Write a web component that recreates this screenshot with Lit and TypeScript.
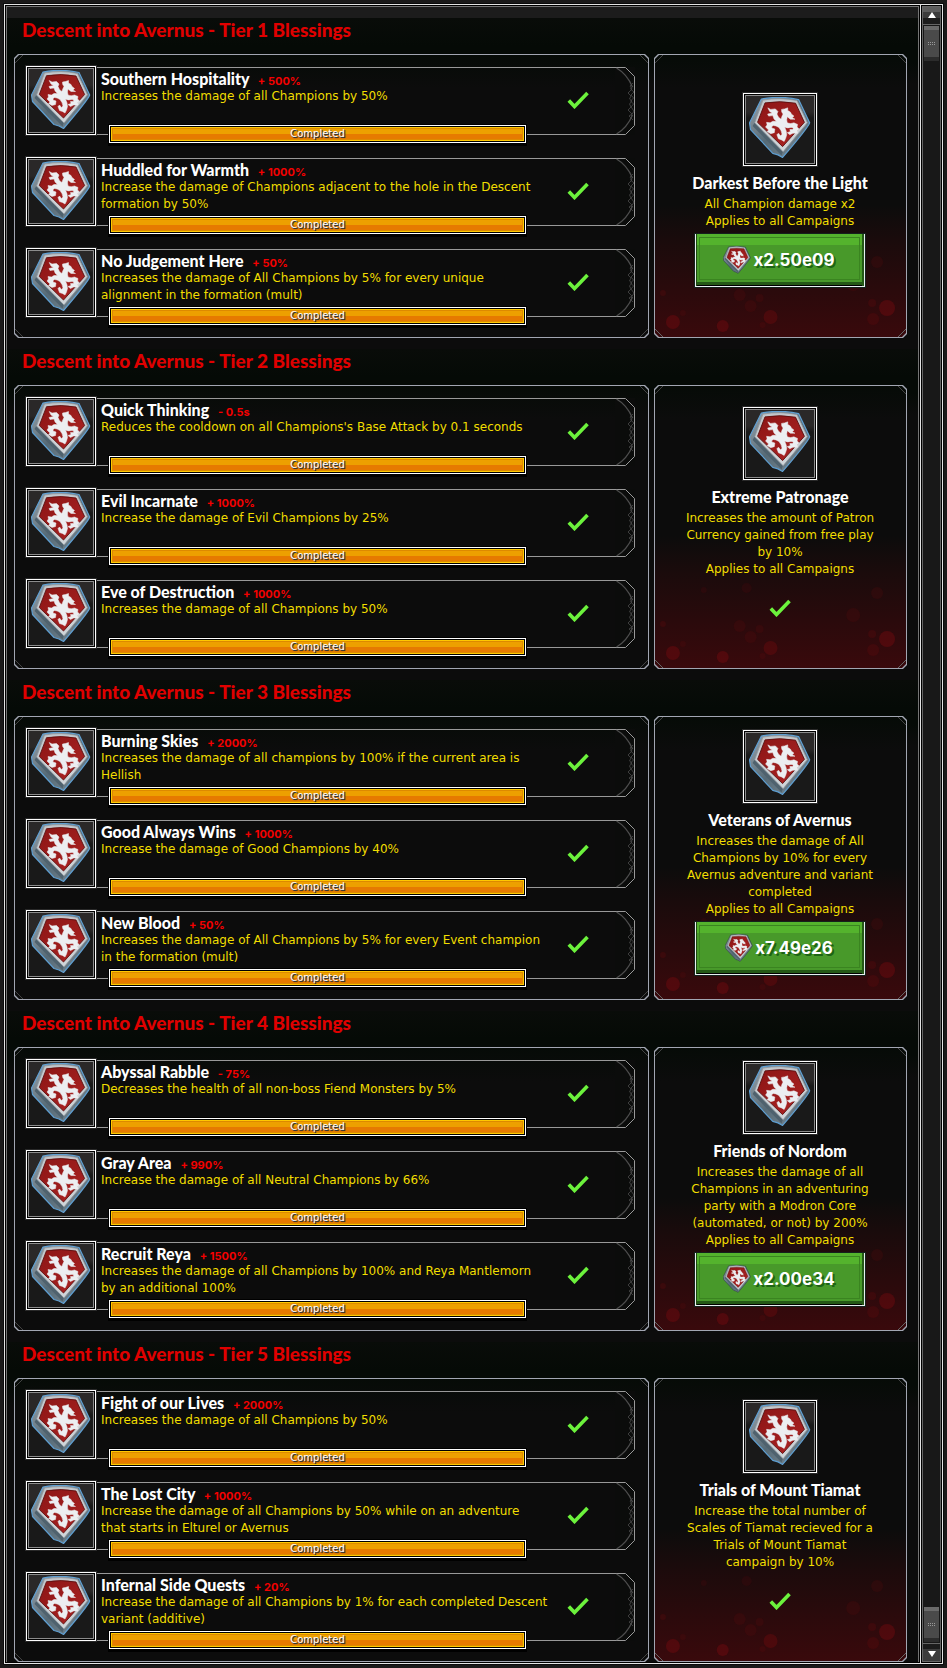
import { LitElement, html, css, svg } from "lit";
import { customElement, property } from "lit/decorators.js";

interface Blessing {
  name: string;
  bonus: string;
  text: string;
}

interface Reward {
  name: string;
  text: string;
  cost?: string;
}

interface Tier {
  level: number;
  blessings: Blessing[];
  reward: Reward;
}

const TIERS: Tier[] = [
  {
    level: 1,
    blessings: [
      { name: "Southern Hospitality", bonus: "+ 500%", text: "Increases the damage of all Champions by 50%" },
      { name: "Huddled for Warmth", bonus: "+ 1000%", text: "Increase the damage of Champions adjacent to the hole in the Descent\nformation by 50%" },
      { name: "No Judgement Here", bonus: "+ 50%", text: "Increases the damage of All Champions by 5% for every unique\nalignment in the formation (mult)" },
    ],
    reward: { name: "Darkest Before the Light", text: "All Champion damage x2\nApplies to all Campaigns", cost: "x2.50e09" },
  },
  {
    level: 2,
    blessings: [
      { name: "Quick Thinking", bonus: "- 0.5s", text: "Reduces the cooldown on all Champions's Base Attack by 0.1 seconds" },
      { name: "Evil Incarnate", bonus: "+ 1000%", text: "Increase the damage of Evil Champions by 25%" },
      { name: "Eve of Destruction", bonus: "+ 1000%", text: "Increases the damage of all Champions by 50%" },
    ],
    reward: { name: "Extreme Patronage", text: "Increases the amount of Patron\nCurrency gained from free play\nby 10%\nApplies to all Campaigns" },
  },
  {
    level: 3,
    blessings: [
      { name: "Burning Skies", bonus: "+ 2000%", text: "Increases the damage of all champions by 100% if the current area is\nHellish" },
      { name: "Good Always Wins", bonus: "+ 1000%", text: "Increase the damage of Good Champions by 40%" },
      { name: "New Blood", bonus: "+ 50%", text: "Increases the damage of All Champions by 5% for every Event champion\nin the formation (mult)" },
    ],
    reward: { name: "Veterans of Avernus", text: "Increases the damage of All\nChampions by 10% for every\nAvernus adventure and variant\ncompleted\nApplies to all Campaigns", cost: "x7.49e26" },
  },
  {
    level: 4,
    blessings: [
      { name: "Abyssal Rabble", bonus: "- 75%", text: "Decreases the health of all non-boss Fiend Monsters by 5%" },
      { name: "Gray Area", bonus: "+ 990%", text: "Increase the damage of all Neutral Champions by 66%" },
      { name: "Recruit Reya", bonus: "+ 1500%", text: "Increases the damage of all Champions by 100% and Reya Mantlemorn\nby an additional 100%" },
    ],
    reward: { name: "Friends of Nordom", text: "Increases the damage of all\nChampions in an adventuring\nparty with a Modron Core\n(automated, or not) by 200%\nApplies to all Campaigns", cost: "x2.00e34" },
  },
  {
    level: 5,
    blessings: [
      { name: "Fight of our Lives", bonus: "+ 2000%", text: "Increases the damage of all Champions by 50%" },
      { name: "The Lost City", bonus: "+ 1000%", text: "Increase the damage of all Champions by 50% while on an adventure\nthat starts in Elturel or Avernus" },
      { name: "Infernal Side Quests", bonus: "+ 20%", text: "Increase the damage of all Champions by 1% for each completed Descent\nvariant (additive)" },
    ],
    reward: { name: "Trials of Mount Tiamat", text: "Increase the total number of\nScales of Tiamat recieved for a\nTrials of Mount Tiamat\ncampaign by 10%" },
  },
];

@customElement("favor-shield")
export class FavorShield extends LitElement {
  @property({ type: Boolean }) glow = false;

  static styles = css`
    :host { display: block; }
    svg { display: block; width: 100%; height: 100%; }
  `;

  render() {
    return html`<svg viewBox="5 4 60 60" aria-hidden="true">
      <defs>
        <linearGradient id="edge" x1="0" y1="0" x2="1" y2="1">
          <stop offset="0" stop-color="#9aa4ac"></stop>
          <stop offset=".5" stop-color="#566a76"></stop>
          <stop offset="1" stop-color="#7d8c96"></stop>
        </linearGradient>
        <linearGradient id="face" x1="0" y1="0" x2="0" y2="1">
          <stop offset="0" stop-color="#c2c6ca"></stop>
          <stop offset="1" stop-color="#d0d6da"></stop>
        </linearGradient>
        <linearGradient id="red" x1="0" y1="0" x2="1" y2="1">
          <stop offset="0" stop-color="#8c1515"></stop>
          <stop offset="1" stop-color="#ad2424"></stop>
        </linearGradient>
      </defs>
      <path d="M17 6Q35 2.500 53 6.500L63.700 29Q62 34 37.500 62.500L33 60L28 58.500L6.500 35.500L5.500 29Z"
        fill="url(#edge)" stroke=${this.glow ? "#5f9fd2" : "#2e3d47"} stroke-width="1.200" stroke-linejoin="round"></path>
      <path d="M8.500 32L36.500 60.500L38 56L11 28Z" fill="#4f626e"></path>
      <path d="M18.500 7Q35 4 51.500 7.500L61.500 28.800L38 57L10.500 29Z" fill="url(#face)" stroke="#8e979e" stroke-width=".8"></path>
      <path d="M20.500 9.700Q35 7.300 50 10L58.600 28.500L37.500 52L13.300 28.500Z" fill="url(#red)" stroke="#5e1010" stroke-width=".9"></path>
      <g fill="#eceef1" stroke="#eceef1" stroke-linejoin="round" stroke-width=".5">
        <path d="M23.200 14.500L26 16L30.500 15.500L33 18L32 20.500Q33 24 36 25.500Q37 22 38 20.500Q36 18.500 36.500 16L39.500 15.500L42.500 14.500L42.500 17L45 18.500L46 20.500L48.500 22.500L47 24L49.500 25.500L45 25.500L42 23Q41 26 42 29Q45 30.500 48.500 29L52 30.500L51.500 33L53.500 35L51.500 37L52 39L47.500 39L44.500 40.500L42 38.500L45 37.500L44.500 35.500L47.500 35.500Q48.500 33 45.500 33.500Q42 34.500 39.500 33Q41.500 37 41.500 40.500L40.500 44L39 47L36.500 45.500L33.500 44.500L32 40.500L33.500 39L35.500 41.500L37 40Q36.500 36.500 34 33.500Q31 31.500 28.500 31.500Q26.500 32 27 34L30 35L29.500 38.500L26 39.500L22.500 37.500L24 36L21 33L22.500 31L22 28.500L25.500 29L28 27.500L31.500 27.500Q28.500 25.500 28 22L24 22.500L23 20.500L27.500 19.500L25 18Z"></path>
      </g>
    </svg>`;
  }
}

const check = html`<svg class="check" viewBox="0 0 22 18" role="img" aria-label="Completed">
  <path d="M1.800 9.500L7.500 15.500L20.500 2" fill="none" stroke="#6cf23c" stroke-width="3.600"></path>
</svg>`;

@customElement("blessing-row")
export class BlessingRow extends LitElement {
  @property({ attribute: false }) blessing!: Blessing;

  static styles = css`
    :host { display: grid; grid-template-columns: 71px 1fr; height: 69px; }
    .icon {
      box-sizing: border-box;
      width: 70px;
      height: 69px;
      border: 1px solid #fff;
      outline: 1px solid #292929;
      padding: 3px 4px;
      background: linear-gradient(#2a2828 0 18px, #191919 24px);
      box-shadow: inset 0 0 0 1px #000, inset 0 0 0 2px #8c8c8c;
    }
    favor-shield { width: 60px; height: 60px; }
    .body {
      display: grid;
      grid-template-columns: 442px 1fr;
      grid-template-rows: 55px 20px;
      margin: 1px 10px 1px 0;
      height: 66px;
      border-top: 1px solid #999;
      border-bottom: 1px solid #999;
      position: relative;
    }
    .text { padding: 2px 0 0 4px; }
    h3 {
      margin: 0 0 1px;
      font: 900 16px/17px Lato, sans-serif;
      color: #fff;
      white-space: nowrap;
    }
    .bonus { margin-left: 5px; font: 700 11px/12px Inter, sans-serif; color: #f40000; }
    p {
      margin: 0;
      font: 12px/17px "DejaVu Sans", sans-serif;
      color: #f2de00;
      white-space: pre;
    }
    .check { width: 22px; height: 18px; margin: 23px 0 0 28px; }
    .bar {
      box-sizing: border-box;
      width: 417px;
      height: 18px;
      margin: 2px 0 0 12px;
      border: 1px solid #fff;
      outline: 1px solid #000;
      padding: 1px;
      background: #000;
      box-shadow: 0 2px 0 1px #000;
    }
    .fill {
      box-sizing: border-box;
      height: 14px;
      border: 1px solid #ffc800;
      background: linear-gradient(#eda000 0 6px, #e67a00 6px);
      box-shadow: inset 0 0 0 1px #dd8a00;
      font: 10px/12px "DejaVu Sans", sans-serif;
      color: #fff;
      text-align: center;
      text-shadow: 1px 1px 0 #333, 1px 1px 1px #333;
    }
    .tip { position: absolute; right: -10px; top: -1px; width: 20px; height: 68px; }
  `;

  render() {
    const b = this.blessing;
    return html`
      <div class="icon"><favor-shield glow></favor-shield></div>
      <div class="body">
        <div class="text">
          <h3>${b.name} <span class="bonus">${b.bonus}</span></h3>
          <p>${b.text}</p>
        </div>
        ${check}
        <div class="bar"><div class="fill" role="progressbar" aria-label=${b.name} aria-valuenow="100">Completed</div></div>
        <svg class="tip" viewBox="0 0 20 68" aria-hidden="true">
          <rect width="20" height="68" fill="#0b0c0b"></rect>
          <path d="M0 .5H10.500L19.500 9.500V58.500L10.500 67.500H0" fill="none" stroke="#999"></path>
          <path d="M1.500 1Q12 7 17.500 20M1.500 67Q12 61 17.500 48" fill="none" stroke="#4d4d4d" stroke-width="1.300"></path>
          <path d="M18 16L15 19L17 22L13 26L16 29L14.500 32L17 34L14.500 37L16 40L13 43L17 47L14 49L18 53M18 19L15.500 22L19 25L16 28L18.500 31L15.500 34L18.500 37L16 40L19 44L16 49" fill="none" stroke="#4a4a4a" stroke-width=".8"></path>
        </svg>
      </div>`;
  }
}

@customElement("reward-card")
export class RewardCard extends LitElement {
  @property({ attribute: false }) reward!: Reward;

  static styles = css`
    :host {
      position: relative;
      box-sizing: border-box;
      display: flex;
      flex-direction: column;
      justify-content: center;
      align-items: center;
      padding: 0 1px 12px 0;
      height: 100%;
      text-align: center;
    }
    .spots { position: absolute; left: 0; bottom: 0; width: 100%; height: 100px; }
    .icon {
      box-sizing: border-box;
      width: 74px;
      height: 73px;
      border: 1px solid #fff;
      outline: 1px solid #292929;
      padding: 3px 5px;
      background: linear-gradient(#2a2828 0 18px, #191919 24px);
      box-shadow: inset 0 0 0 1px #000, inset 0 0 0 2px #8c8c8c;
    }
    favor-shield { width: 62px; height: 62px; }
    h3 {
      margin: 8px 0 5px;
      font: 900 16px/17px Lato, sans-serif;
      color: #fff;
    }
    p {
      margin: 0;
      font: 12px/17px "DejaVu Sans", sans-serif;
      color: #f2de00;
      white-space: pre;
    }
    .action {
      position: relative;
      display: grid;
      place-items: center;
      width: 170px;
      height: 53px;
      margin-top: 4px;
    }
    .check { width: 22px; height: 18px; margin-bottom: 2px; }
    button {
      box-sizing: border-box;
      display: flex;
      justify-content: center;
      align-items: center;
      gap: 2px;
      width: 170px;
      height: 53px;
      border: 1px solid #e8f0f0;
      border-top: 0;
      padding: 0 2px 0 0;
      background: linear-gradient(#54b32d 0 11px, #48992a 11px 48px, #245816 48px 51px, #12300c 51px);
      box-shadow: inset 1px 0 #1f4a12, inset -2px 0 #245816, inset 0 -1px #000;
      outline: 1px solid #14201c;
      font: 700 17px/24px Inter, sans-serif;
      color: #fff;
      text-shadow: 2px 2px 0 #1d6415;
    }
    button::before {
      content: "";
      position: absolute;
      inset: 3px 5px 7px 4px;
      border: 1px solid #3a8420;
    }
    button favor-shield { width: 28px; height: 28px; }
  `;

  render() {
    const r = this.reward;
    return html`
      <svg class="spots" viewBox="0 0 252 100" preserveAspectRatio="none" aria-hidden="true">
        ${[
          [18, 85, 7, 0.4], [68, 89, 6, 0.4], [116, 80, 7, 0.35], [233, 71, 8, 0.4], [219, 82, 6, 0.2],
          [85, 58, 6, 0.15], [96, 69, 6, 0.15], [105, 61, 4, 0.15], [28, 76, 3, 0.15], [8, 56, 3, 0.2],
          [218, 66, 4, 0.2], [199, 47, 7, 0.15], [223, 25, 6, 0.15], [92, 20, 5, 0.12], [49, 22, 3, 0.12], [108, 88, 3, 0.15],
        ].map(([x, y, r, o]) => svg`<circle cx=${x} cy=${y} r=${r} fill="#7c0b0e" fill-opacity=${o}></circle>`)}
      </svg>
      <div class="icon"><favor-shield glow></favor-shield></div>
      <h3>${r.name}</h3>
      <p>${r.text}</p>
      <div class="action">
        ${r.cost ? html`<button type="button"><favor-shield></favor-shield><span>${r.cost}</span></button>` : check}
      </div>`;
  }
}

@customElement("app-root")
export class AppRoot extends LitElement {
  static styles = css`
    :host {
      display: block;
      box-sizing: border-box;
      min-height: 100vh;
      padding: 4px;
      background: #1b1a1a;
    }
    .frame {
      display: grid;
      grid-template-columns: 1fr 22px;
      border: 1px solid #e4e4e4;
      outline: 1px solid #0c0c0c;
    }
    main {
      border: 1px solid #000;
      box-shadow: inset 0 0 0 1px #747474;
      padding: 12px 12px 0 8px;
      background: linear-gradient(#1c1c1c 0 12px, #0c0c0c 12px);
    }
    .tier {
      margin: 0 -11px 0 -7px;
      padding: 0 11px 11px 7px;
      background: linear-gradient(#090c09, #050a06 28px 44px, #0c0c0c 66px);
    }
    .tier:last-child { padding-bottom: 0; }
    h2 {
      margin: 0;
      height: 36px;
      padding-left: 8px;
      font: 900 19px/24px Lato, sans-serif;
      color: #e00000;
    }
    .panels {
      display: grid;
      grid-template-columns: 1fr 253px;
      gap: 5px;
    }
    .panel {
      position: relative;
      box-sizing: border-box;
      height: 284px;
      padding: 1px;
      background: #a2a6b2;
      clip-path: polygon(4px 0, calc(100% - 4px) 0, 100% 4px, 100% calc(100% - 4px), calc(100% - 4px) 100%, 4px 100%, 0 calc(100% - 4px), 0 4px);
    }
    .inner {
      box-sizing: border-box;
      height: 100%;
      clip-path: polygon(4px 0, calc(100% - 4px) 0, 100% 4px, 100% calc(100% - 4px), calc(100% - 4px) 100%, 4px 100%, 0 calc(100% - 4px), 0 4px);
      background:
        linear-gradient(135deg, transparent 5px, #444 5px 6px, transparent 6px) 0 0 / 12px 12px no-repeat,
        linear-gradient(225deg, transparent 5px, #444 5px 6px, transparent 6px) 100% 0 / 12px 12px no-repeat,
        linear-gradient(45deg, transparent 5px, #444 5px 6px, transparent 6px) 0 100% / 12px 12px no-repeat,
        linear-gradient(315deg, transparent 5px, #444 5px 6px, transparent 6px) 100% 100% / 12px 12px no-repeat,
        linear-gradient(#060b07, #0c0c0c 33px);
    }
    .list { display: grid; align-content: start; gap: 22px; padding: 11px 13px 0 11px; }
    .reward {
      background:
        linear-gradient(135deg, transparent 5px, #444 5px 6px, transparent 6px) 0 0 / 12px 12px no-repeat,
        linear-gradient(225deg, transparent 5px, #444 5px 6px, transparent 6px) 100% 0 / 12px 12px no-repeat,
        linear-gradient(45deg, transparent 5px, #666 5px 6px, transparent 6px) 0 100% / 12px 12px no-repeat,
        linear-gradient(315deg, transparent 5px, #666 5px 6px, transparent 6px) 100% 100% / 12px 12px no-repeat,
        linear-gradient(#060b07, #0c0c0c 33px 150px, #1a0b0c 185px, #3a090c 284px);
    }
    .scroll {
      display: flex;
      flex-direction: column;
      border-left: 1px solid #e4e4e4;
      padding: 1px;
      background: #181818;
      box-shadow: inset 0 0 0 1px #000, inset 0 0 0 2px #666;
    }
    .scroll button {
      display: grid;
      place-items: center;
      height: 18px;
      margin: 1px 1px 0;
      border: 0;
      border-bottom: 1px solid #666;
      padding: 0 0 5px;
      background: linear-gradient(#5c5c5c 0 5px, #3c3c3c 5px 11px, #1c1c1c 11px);
    }
    .scroll .down {
      border-top: 1px solid #666;
      border-bottom: 0;
      margin: 0 1px 1px;
      padding: 3px 0 0;
      background: linear-gradient(#1c1c1c 0 5px, #3c3c3c 5px);
    }
    .scroll .up svg { width: 8px; height: 6px; margin-top: 3px; }
    .scroll svg { width: 8px; height: 6px; }
    .track { flex: 1; display: flex; flex-direction: column; justify-content: space-between; padding: 1px 2px; }
    .thumb {
      display: grid;
      place-items: center;
      height: 35px;
      background: linear-gradient(#6a6a6a 0 4px, #4a4a4a 4px 31px, #2c2c2c 31px);
    }
    .grip {
      width: 7px;
      height: 3px;
      background:
        linear-gradient(transparent 1px, #4a4a4a 1px 2px, transparent 2px),
        repeating-linear-gradient(90deg, #999 0 1px, #4a4a4a 1px 2px);
    }
  `;

  private renderTier(tier: Tier) {
    return html`<section class="tier">
      <h2>Descent into Avernus - Tier ${tier.level} Blessings</h2>
      <div class="panels">
        <div class="panel"><div class="inner list">
          ${tier.blessings.map((b) => html`<blessing-row .blessing=${b}></blessing-row>`)}
        </div></div>
        <div class="panel"><div class="inner reward"><reward-card .reward=${tier.reward}></reward-card></div></div>
      </div>
    </section>`;
  }

  render() {
    return html`<div class="frame">
      <main>${TIERS.map((t) => this.renderTier(t))}</main>
      <div class="scroll">
        <button type="button" class="up" aria-label="Scroll up">
          <svg viewBox="0 0 8 6"><path d="M4 0L8 6H0Z" fill="#fff"></path></svg>
        </button>
        <div class="track">
          <div class="thumb"><div class="grip"></div></div>
          <div class="thumb"><div class="grip"></div></div>
        </div>
        <button type="button" class="down" aria-label="Scroll down">
          <svg viewBox="0 0 8 6"><path d="M4 6L0 0H8Z" fill="#fff"></path></svg>
        </button>
      </div>
    </div>`;
  }
}
